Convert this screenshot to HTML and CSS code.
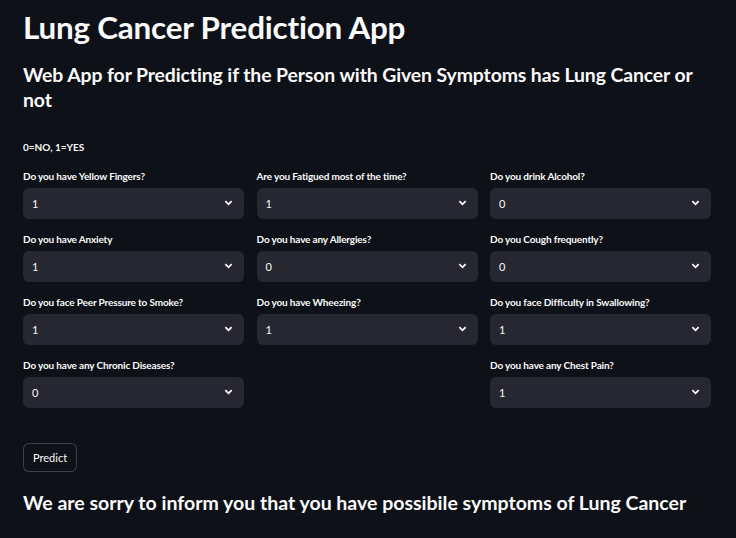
FILE: index.html
```html
<!DOCTYPE html>
<html>
<head>
<meta charset="utf-8">
<link rel="stylesheet" href="styles.css">
</head>
<body>
<main class="app">
  <h1 class="title">Lung Cancer Prediction App</h1>
  <h3 class="subtitle">Web App for Predicting if the Person with Given Symptoms has Lung Cancer or not</h3>
  <p class="note">0=NO, 1=YES</p>
  <div class="grid">
    <div class="col">
      <div class="field"><label>Do you have Yellow Fingers?</label><div class="select"><span>1</span><svg viewBox="0 0 10 6" class="chev"><polyline points="1.5,1 5,4.5 8.5,1"/></svg></div></div>
      <div class="field"><label>Do you have Anxiety</label><div class="select"><span>1</span><svg viewBox="0 0 10 6" class="chev"><polyline points="1.5,1 5,4.5 8.5,1"/></svg></div></div>
      <div class="field"><label>Do you face Peer Pressure to Smoke?</label><div class="select"><span>1</span><svg viewBox="0 0 10 6" class="chev"><polyline points="1.5,1 5,4.5 8.5,1"/></svg></div></div>
      <div class="field"><label>Do you have any Chronic Diseases?</label><div class="select"><span>0</span><svg viewBox="0 0 10 6" class="chev"><polyline points="1.5,1 5,4.5 8.5,1"/></svg></div></div>
    </div>
    <div class="col">
      <div class="field"><label>Are you Fatigued most of the time?</label><div class="select"><span>1</span><svg viewBox="0 0 10 6" class="chev"><polyline points="1.5,1 5,4.5 8.5,1"/></svg></div></div>
      <div class="field"><label>Do you have any Allergies?</label><div class="select"><span>0</span><svg viewBox="0 0 10 6" class="chev"><polyline points="1.5,1 5,4.5 8.5,1"/></svg></div></div>
      <div class="field"><label>Do you have Wheezing?</label><div class="select"><span>1</span><svg viewBox="0 0 10 6" class="chev"><polyline points="1.5,1 5,4.5 8.5,1"/></svg></div></div>
    </div>
    <div class="col">
      <div class="field"><label>Do you drink Alcohol?</label><div class="select"><span>0</span><svg viewBox="0 0 10 6" class="chev"><polyline points="1.5,1 5,4.5 8.5,1"/></svg></div></div>
      <div class="field"><label>Do you Cough frequently?</label><div class="select"><span>0</span><svg viewBox="0 0 10 6" class="chev"><polyline points="1.5,1 5,4.5 8.5,1"/></svg></div></div>
      <div class="field"><label>Do you face Difficulty in Swallowing?</label><div class="select"><span>1</span><svg viewBox="0 0 10 6" class="chev"><polyline points="1.5,1 5,4.5 8.5,1"/></svg></div></div>
      <div class="field"><label>Do you have any Chest Pain?</label><div class="select"><span>1</span><svg viewBox="0 0 10 6" class="chev"><polyline points="1.5,1 5,4.5 8.5,1"/></svg></div></div>
    </div>
  </div>
  <button class="btn">Predict</button>
  <h3 class="result">We are sorry to inform you that you have possibile symptoms of Lung Cancer</h3>
</main>
</body>
</html>
```
FILE: styles.css
```css
html, body {
  margin: 0;
  padding: 0;
  background: #0e1117;
  color: #fafafa;
  font-family: Lato, "Open Sans", sans-serif;
  height: 100%;
  overflow: hidden;
}
.app {
  width: 688px;
  padding: 7px 0 0 23px;
}
.title {
  margin: 0;
  font-size: 31.4px;
  font-weight: 700;
  line-height: 40px;
  letter-spacing: -0.2px;
}
.subtitle {
  margin: 15px 0 0;
  font-size: 19.4px;
  font-weight: 700;
  line-height: 25px;
  letter-spacing: -0.1px;
}
.note {
  margin: 28px 0 0;
  font-size: 10px;
  font-weight: 700;
  line-height: 14px;
  letter-spacing: 0;
}
.grid {
  display: grid;
  grid-template-columns: repeat(3, 1fr);
  column-gap: 12.5px;
  margin-top: 15px;
}
.col {
  display: flex;
  flex-direction: column;
  gap: 13.4px;
}
.field label {
  display: block;
  font-size: 10px;
  font-weight: 700;
  line-height: 14px;
  height: 19px;
  letter-spacing: -0.15px;
}
.select {
  height: 30.6px;
  background: #262730;
  border-radius: 6px;
  display: flex;
  align-items: center;
  justify-content: space-between;
  padding: 0 11px 0 9px;
  font-size: 11px;
}
.chev {
  width: 9px;
  height: 6px;
  fill: none;
  stroke: #fafafa;
  stroke-width: 2;
}
.btn {
  display: block;
  margin-top: 35px;
  height: 29px;
  padding: 0 9px;
  background: #0e1117;
  color: #fafafa;
  border: 1px solid rgba(250,250,250,0.2);
  border-radius: 6px;
  font-family: inherit;
  font-size: 11px;
}
.result {
  margin: 18px 0 0;
  font-size: 19.5px;
  font-weight: 700;
  line-height: 26px;
}
```
